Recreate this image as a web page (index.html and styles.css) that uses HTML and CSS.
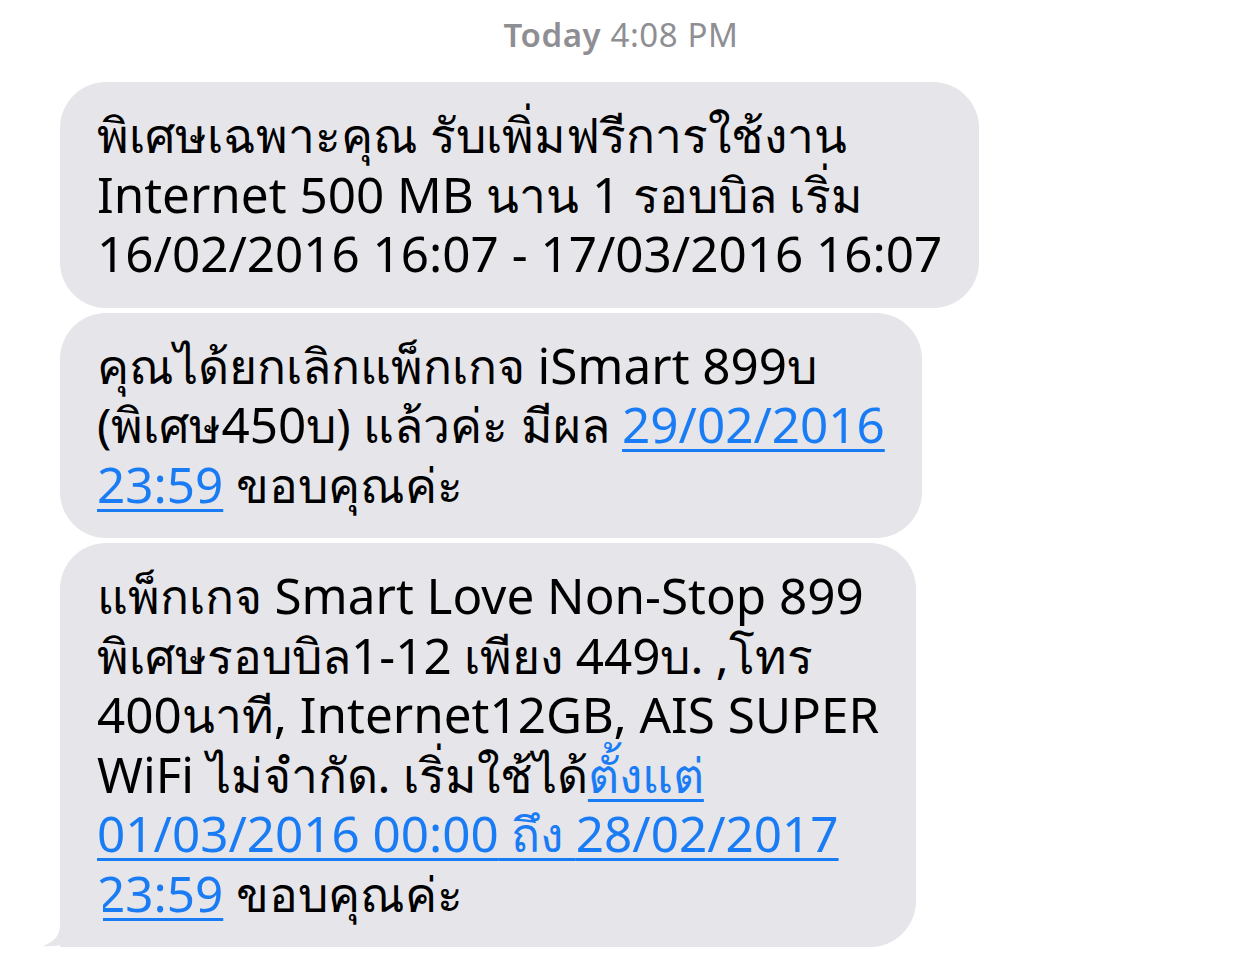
FILE: index.html
```html
<!DOCTYPE html>
<html lang="th">
<head>
<meta charset="UTF-8">
<title>Messages</title>
<link rel="stylesheet" href="styles.css">
</head>
<body>
<div class="stamp"><b>Today</b> 4:08 PM</div>

<div class="thread">
    <div class="bubble">
        พิเศษเฉพาะคุณ รับเพิ่มฟรีการใช้งาน<br>
        <span class="en">Internet 500 MB</span> นาน <span class="en">1</span> รอบบิล เริ่ม<br>
        <span class="en">16/02/2016 16:07 - 17/03/2016 16:07</span>
    </div>

    <div class="bubble">
        คุณได้ยกเลิกแพ็กเกจ <span class="en">iSmart 899</span>บ<br>
        (พิเศษ<span class="en">450</span>บ) แล้วค่ะ มีผล <a class="en" href="#">29/02/2016<br>23:59</a> ขอบคุณค่ะ
    </div>

    <div class="bubble last">
        แพ็กเกจ <span class="en">Smart Love Non-Stop 899</span><br>
        พิเศษรอบบิล<span class="en">1-12</span> เพียง <span class="en">449</span>บ. ,โทร<br>
        <span class="en">400</span>นาที<span class="en">, Internet12GB, AIS SUPER</span><br>
        <span class="en">WiFi</span> ไม่จำกัด. เริ่มใช้ได้<a href="#">ตั้งแต่<br><span class="en">01/03/2016 00:00</span> ถึง <span class="en">28/02/2017<br>23:59</span></a> ขอบคุณค่ะ
        <svg class="tail" width="60" height="47" viewBox="0 0 60 47">
            <path d="M17 0 L17 26 C17 35 11 42 0 46 C13 47 26 44 36 38 C43 44 52 47 60 47 L60 0 Z" fill="#e5e5ea"/>
        </svg>
    </div>
</div>
</body>
</html>
```
FILE: styles.css
```css
*{
    margin: 0;
    padding: 0;
    box-sizing: border-box;
}
html,body{
    background-color: #fff;
}
body{
    font-family: "Noto Sans", Roboto, sans-serif;
    color: #000;
}

.stamp{
    text-align: center;
    color: #8e8e93;
    font-size: 33px;
    letter-spacing: 0.6px;
    line-height: 38px;
    padding: 16px 0 0 0;
    height: 82px;
}
.stamp b{
    font-weight: 600;
}

.thread{
    display: flex;
    flex-direction: column;
    align-items: flex-start;
    gap: 5px;
    padding-left: 60px;
}

.bubble{
    position: relative;
    background-color: #e5e5ea;
    border-radius: 46px;
    padding: 23px 37px 24px;
    font-size: 48px;
    line-height: 59.5px;
    white-space: nowrap;
}
/* latin runs are a little larger than the thai fallback */
.bubble .en{
    font-size: 49.4px;
    line-height: 1;
}
.bubble a{
    color: #1a7cf5;
    text-decoration: underline;
    text-decoration-thickness: 3px;
    text-underline-offset: 6px;
}

.bubble.last{
    border-bottom-left-radius: 0;
}
.tail{
    position: absolute;
    left: -17px;
    bottom: 0;
}
```
